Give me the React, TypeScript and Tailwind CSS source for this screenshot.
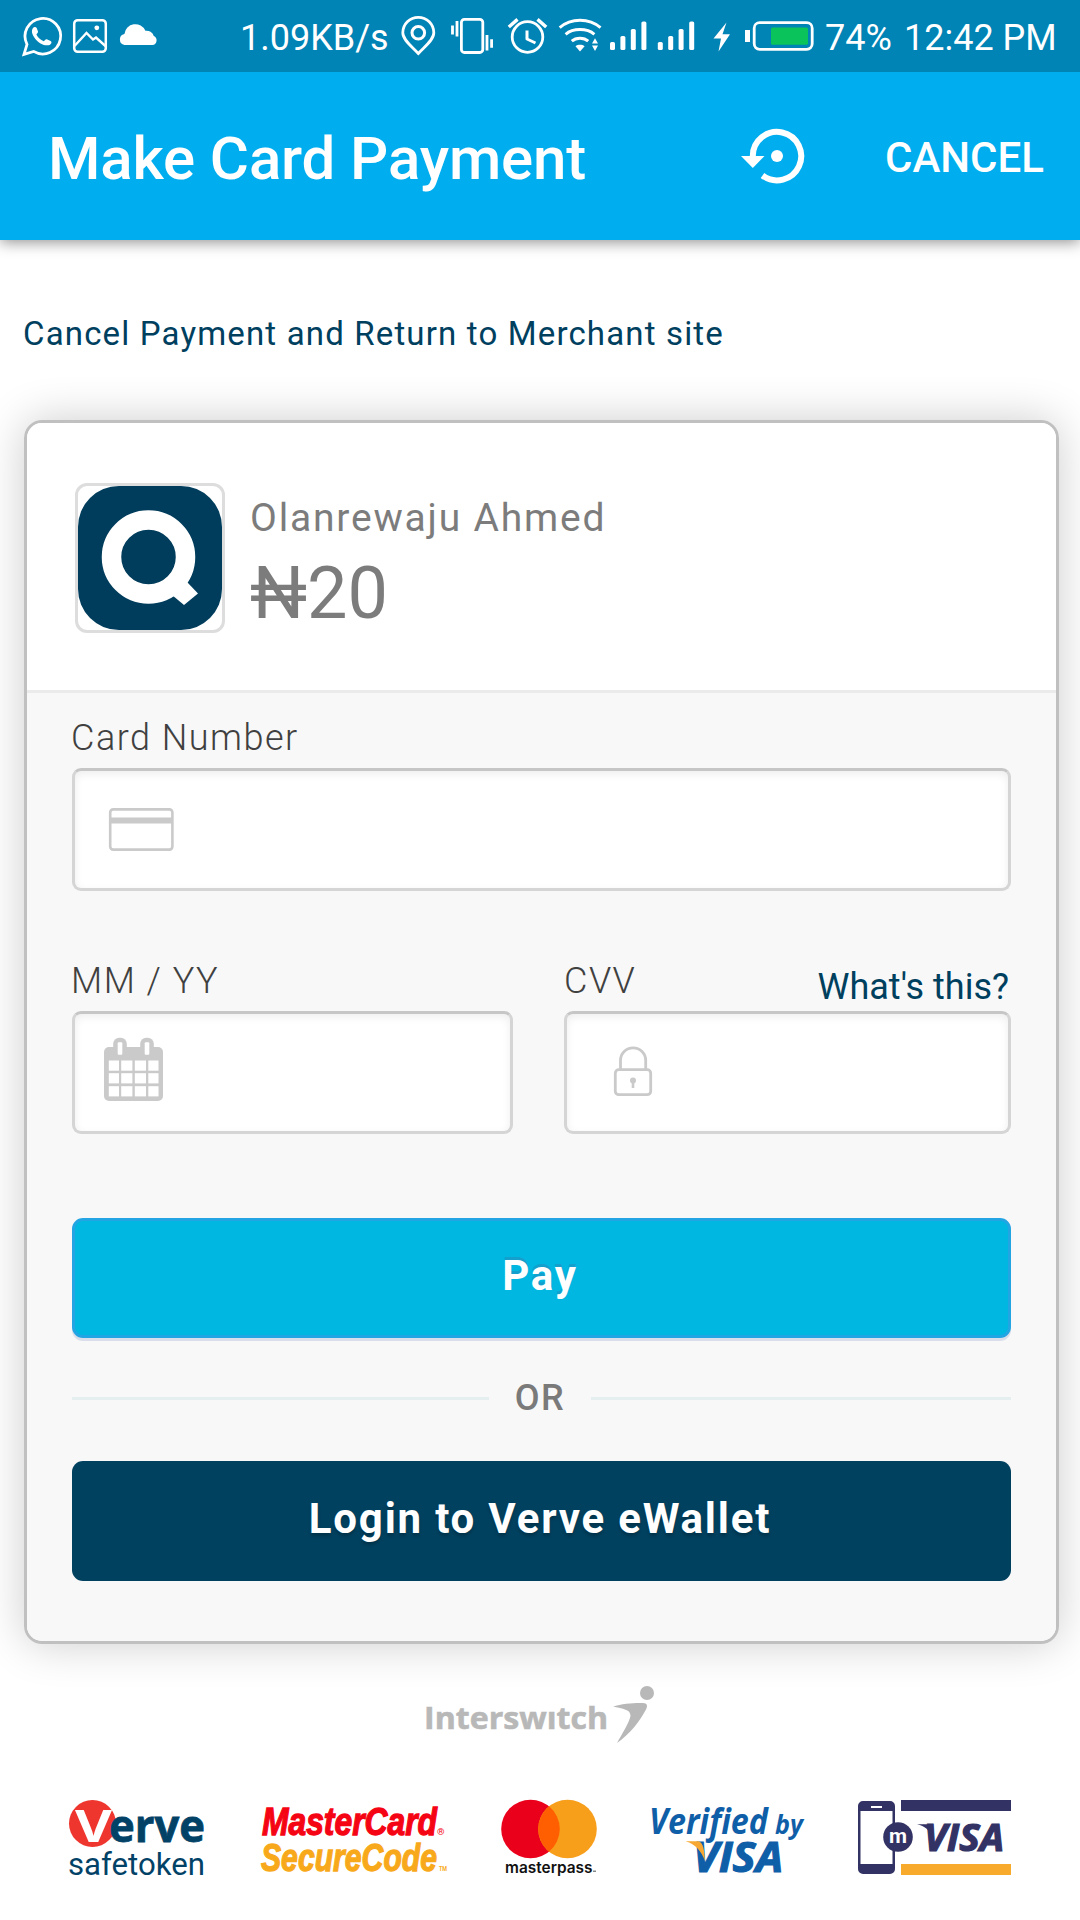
import type { ReactNode } from "react";

type BoxProps = { box: [number, number, number, number]; className?: string; children: ReactNode };

/* An svg whose viewBox uses page units, so one unit is always one pixel. */
function Art({ box, className = "", children }: BoxProps) {
  return (
    <svg
      viewBox={box.join(" ")}
      width={box[2]}
      height={box[3]}
      className={"block shrink-0 overflow-visible " + className}
      fill="none"
    >
      {children}
    </svg>
  );
}

type FitProps = {
  x: number;
  y: number;
  w: number;
  size: number;
  fill: string;
  weight?: number;
  family?: string;
  italic?: boolean;
  stroke?: number;
  children: string;
};

function Fit({ x, y, w, size, fill, weight = 400, family = "Roboto, sans-serif", italic, stroke = 0, children }: FitProps) {
  return (
    <text
      x={x}
      y={y}
      textLength={w}
      lengthAdjust="spacingAndGlyphs"
      fontSize={size}
      fontWeight={weight}
      fontFamily={family}
      fontStyle={italic ? "italic" : "normal"}
      fill={fill}
      stroke={stroke ? fill : "none"}
      strokeWidth={stroke}
    >
      {children}
    </text>
  );
}

function Signal({ x }: { x: number }) {
  return (
    <g fill="#fff">
      <rect x={x} y="42" width="5" height="8" rx="1.6" />
      <rect x={x + 10.4} y="36" width="5" height="14" rx="1.6" />
      <rect x={x + 20.8} y="29" width="5" height="21" rx="1.6" />
      <rect x={x + 31.4} y="21.5" width="5" height="28.5" rx="1.6" />
    </g>
  );
}

function StatusBar() {
  return (
    <div className="relative z-10 flex h-[72px] items-start bg-[#0083b5] text-[36px] leading-[76px] text-white">
      <Art box={[0, 0, 240, 72]}>
        <path d="M24 54.3 L27 44.3 A17.8 17.8 0 1 1 33.6 51.4 Z" stroke="#fff" strokeWidth="2.8" strokeLinejoin="miter" />
        <path
          d="M33 28 C34 26.8 36 26.8 36.8 28.2 L38 31.5 C38.3 32.5 37 33.6 36.4 34.4 C38 37.6 40.4 39.8 43.8 41.2 C44.7 40.4 45.6 38.8 46.8 39.2 L50.6 41 C52.4 42 51.4 44.6 48.6 45.2 C44 46 38.4 43 35 38.4 C31.6 34 31.2 30.4 33 28Z"
          fill="#fff"
        />
        <rect x="74.2" y="20.2" width="31.6" height="31.6" rx="3.5" stroke="#fff" strokeWidth="2.5" />
        <path d="M74.5 46 L86.5 33 L93 39.5 L96 37.5 L106 46.5" stroke="#fff" strokeWidth="2.4" />
        <circle cx="96.8" cy="27.8" r="2.4" fill="#fff" />
        <path
          d="M124.5 45 A5.6 5.6 0 0 1 124.4 34 A11 11 0 0 1 145.4 30.8 A7.6 7.6 0 0 1 153.8 36 A4.8 4.8 0 0 1 153 45Z"
          fill="#fff"
        />
      </Art>
      <span className="w-[160px] whitespace-nowrap">1.09KB/s</span>
      <Art box={[400, 0, 425, 72]}>
        <path d="M418.3 53.5 C412 46.5 402.8 40 402.8 32.8 A15.5 15.5 0 0 1 433.8 32.8 C433.8 40 424.6 46.5 418.3 53.5Z" stroke="#fff" strokeWidth="2.8" />
        <circle cx="418.3" cy="32.8" r="6.3" stroke="#fff" strokeWidth="3" />
        <rect x="461.4" y="19.3" width="21.4" height="33.2" rx="3" stroke="#fff" strokeWidth="2.8" />
        <path d="M452.5 25.5v9M457 21v15.5M487 35v15.5M491.6 39.3v8.4" stroke="#fff" strokeWidth="2.8" />
        <circle cx="527.5" cy="37" r="15.3" stroke="#fff" strokeWidth="2.8" />
        <path d="M527 30.5v8.5l8.5 4" stroke="#fff" strokeWidth="3" strokeLinejoin="round" />
        <path d="M508.8 27 L517.5 19.4 M546.2 27 L537.5 19.4" stroke="#fff" strokeWidth="3.4" />
        <path d="M559.7 27.6 C571 17.8 589 17.8 600.5 27.6 M565.6 34.3 C573 28 587 28 594.4 34.3 M571.8 41.2 C576 37.2 584 37.2 588.2 41.2" stroke="#fff" strokeWidth="3" />
        <path d="M575.5 46.2 C578 44.4 582 44.4 584.6 46.2 L580 51.4Z" fill="#fff" />
        <path d="M592 43.6 L595 38.2 L598 43.6Z M592 45.6 L595 51 L598 45.6Z" fill="#fff" />
        <Signal x={610} />
        <Signal x={657.8} />
        <path d="M726.5 22.5 L713.5 38.5 L721 38.5 L718.5 51.5 L730 34.3 L722.5 34.3Z" fill="#fff" />
        <rect x="745" y="30" width="5" height="12" fill="#fff" />
        <rect x="754.2" y="22.7" width="58" height="26.6" rx="5.5" stroke="#fff" strokeWidth="2.8" />
        <rect x="771" y="27.4" width="37" height="17.4" rx="1.5" fill="#0ac45b" />
      </Art>
      <span className="w-[79px] whitespace-nowrap">74%</span>
      <span className="whitespace-nowrap">12:42 PM</span>
    </div>
  );
}

function AppBar() {
  return (
    <header className="relative flex h-[168px] items-center bg-[#00adef] pl-[48px] font-medium text-white shadow-[0_2px_14px_rgba(0,0,0,0.45)]">
      <h1 className="w-[690px] whitespace-nowrap pt-[5px] text-[60px] leading-[168px] tracking-[-0.14px]">Make Card Payment</h1>
      <Art box={[738, 72, 146, 168]}>
        <path d="M752.8 156 A24.2 24.2 0 1 1 762.5 175.5" stroke="#fff" strokeWidth="6" />
        <path d="M741 156 H764.5 L752.8 168Z" fill="#fff" />
        <circle cx="777" cy="156" r="6" fill="#fff" />
      </Art>
      <span className="pl-px pt-[3px] text-[42px] leading-[168px]">CANCEL</span>
    </header>
  );
}

function Merchant() {
  return (
    <section className="flex h-[270px] gap-[25px] border-b-[3px] border-[#ebebeb] bg-white pl-[48px] pt-[60px]">
      <div className="h-[150px] w-[150px] overflow-hidden rounded-[12px] border-[3px] border-[#dddddd]">
        <Art box={[0, 0, 144, 144]}>
          <rect width="144" height="144" rx="41" fill="#003d5c" />
          <circle cx="70.5" cy="71" r="37" stroke="#fff" strokeWidth="19.5" />
          <path d="M93 97 L109 96 L120 107.5 L106 119 L94 109Z" fill="#fff" />
        </Art>
      </div>
      <div className="pt-[12px] text-[#7c7c7c]">
        <div className="h-[46px] whitespace-nowrap text-[39px] leading-[46px] tracking-[1.8px]">Olanrewaju Ahmed</div>
        <div className="whitespace-nowrap text-[72px] leading-[106px]">₦20</div>
      </div>
    </section>
  );
}

const field =
  "rounded-[9px] border-[3px] border-[#d5d5d5] border-t-[#c6c6c6] bg-white shadow-[inset_0_3px_9px_rgba(0,0,0,0.07)]";
const label = "text-[36px] font-light leading-[42px] tracking-[1.5px] text-[#404040] whitespace-nowrap";

function CardForm() {
  return (
    <section className="h-[948px] bg-[#f8f8f8] pl-[45px] pr-[45px] pt-[24px]">
      <div className={"ml-[-1px] " + label}>Card Number</div>
      <div className={"mt-[9px] h-[123px] w-[939px] " + field}>
        <Art box={[75, 771, 120, 117]}>
          <rect x="110.2" y="809.4" width="62.2" height="40.2" rx="3" stroke="#cacaca" strokeWidth="2.6" />
          <path d="M110 820.5H172.6" stroke="#cacaca" strokeWidth="6" />
        </Art>
      </div>
      <div className="mt-[69px] flex gap-[51px]">
        <div className="w-[441px]">
          <div className={"ml-[-1px] h-[51px] " + label}>MM / YY</div>
          <div className={"h-[123px] w-[441px] " + field}>
            <Art box={[75, 1014, 120, 117]}>
              <rect x="104" y="1047" width="59" height="54" rx="5" fill="#cacaca" />
              <rect x="113.2" y="1037.8" width="13.6" height="20" rx="6" fill="#cacaca" />
              <rect x="140.2" y="1037.8" width="13.6" height="20" rx="6" fill="#cacaca" />
              <rect x="117.7" y="1042.3" width="4.6" height="12.5" rx="1" fill="#fff" />
              <rect x="144.7" y="1042.3" width="4.6" height="12.5" rx="1" fill="#fff" />
              {[1060.5, 1073.2, 1086.2].map((y) =>
                [108.8, 121.2, 134.8, 148.3].map((x) => (
                  <rect key={x + "-" + y} x={x} y={y} width={x === 108.8 || x === 148.3 ? 10.2 : 11.2} height="10.2" fill="#fff" />
                )),
              )}
            </Art>
          </div>
        </div>
        <div className="w-[447px]">
          <div className="flex h-[51px] justify-between pr-[2px]">
            <span className={label}>CVV</span>
            <span className="whitespace-nowrap pt-[6px] text-[36px] leading-[42px] text-[#00405f]">What's this?</span>
          </div>
          <div className={"h-[123px] w-[447px] " + field}>
            <Art box={[567, 1018, 120, 117]}>
              <rect x="615.3" y="1073.7" width="35.4" height="25" rx="3.5" stroke="#cacaca" strokeWidth="2.8" />
              <path d="M620.5 1073V1064.5A12.6 12.6 0 0 1 645.7 1064.5V1073" stroke="#cacaca" strokeWidth="2.8" />
              <circle cx="633" cy="1084.5" r="3" fill="#cacaca" />
              <path d="M633 1084V1092" stroke="#cacaca" strokeWidth="2.6" />
            </Art>
          </div>
        </div>
      </div>
      <button className="mt-[84px] block h-[120px] w-[939px] rounded-[11px] border-[3px] border-[#24a5e3] bg-[#00b7e1] pb-[4px] pr-[3px] text-[42px] font-bold leading-[110px] tracking-[1.8px] text-white shadow-[0_3px_0_#d9deea] [text-shadow:0_-3px_0_#159fcd]">
        Pay
      </button>
      <div className="mt-[38px] flex h-[44px] items-center text-[36px] font-medium leading-[44px] tracking-[1.5px] text-[#7a7a7a]">
        <span className="mt-px h-[3px] w-[417px] bg-[#e6efef]" />
        <span className="w-[102px] text-center">OR</span>
        <span className="mt-px h-[3px] flex-1 bg-[#e6efef]" />
      </div>
      <button className="mt-[41px] block h-[120px] w-[939px] rounded-[11px] bg-[#00415f] pb-[4px] pr-[3px] text-[42px] font-bold leading-[116px] tracking-[1.8px] text-white [text-shadow:0_3px_3px_rgba(0,0,0,0.2)]">
        Login to Verve eWallet
      </button>
    </section>
  );
}

function Interswitch() {
  return (
    <Art box={[420, 1680, 240, 65]} className="ml-[420px] mt-[36px]">
      <Fit x={424} y={1728.7} w={184} size={31} weight={700} family="Open Sans, sans-serif" fill="#b8b8b8" stroke={0.6}>
        Interswıtch
      </Fit>
      <circle cx="647" cy="1693" r="7" fill="#b8b8b8" />
      <path d="M613 1706.5 C622 1703.5 636 1702.6 643 1703 C647 1703.2 648 1705.5 646 1709.5 C640 1721 630 1734 617 1743 C622 1734 629 1723 630.5 1716 C631 1709 621 1708.5 613 1706.5Z" fill="#b8b8b8" />
    </Art>
  );
}

function Partners() {
  return (
    <footer className="mt-[50px] flex h-[85px] pl-[60px]">
      <Art box={[60, 1795, 190, 85]}>
        <circle cx="92.5" cy="1823.5" r="23.5" fill="#ee352e" />
        <Fit x={109} y={1842} w={96} size={45} weight={700} family="Open Sans, sans-serif" fill="#034267" stroke={0.8}>erve</Fit>
        <Fit x={75} y={1842} w={37} size={44} weight={700} family="Open Sans, sans-serif" fill="#fff">V</Fit>
        <Fit x={68} y={1874.5} w={137} size={31} fill="#034267">safetoken</Fit>
      </Art>
      <Art box={[250, 1795, 210, 85]}>
        <Fit x={262} y={1835} w={175} size={38.5} weight={700} italic family="Liberation Sans, sans-serif" fill="#f50514" stroke={1.3}>MasterCard</Fit>
        <Fit x={261} y={1871} w={176} size={38.5} weight={700} italic family="Liberation Sans, sans-serif" fill="#f8a91b" stroke={1.3}>SecureCode</Fit>
        <Fit x={437} y={1835} w={7.5} size={9} fill="#f50514">®</Fit>
        <Fit x={439} y={1871} w={8} size={7} weight={700} fill="#f8a91b">TM</Fit>
      </Art>
      <Art box={[460, 1795, 180, 85]}>
        <circle cx="530.5" cy="1829" r="29.3" fill="#eb001b" />
        <circle cx="567.5" cy="1829" r="29.3" fill="#f79e1b" />
        <path d="M549 1806.3 A29.3 29.3 0 0 1 549 1851.7 A29.3 29.3 0 0 1 549 1806.3Z" fill="#ff5f00" />
        <Fit x={505} y={1872.5} w={87.5} size={15.5} weight={600} family="Inter, sans-serif" fill="#111">masterpass</Fit>
        <rect x="593" y="1870.5" width="3" height="1.5" fill="#888" />
      </Art>
      <Art box={[640, 1795, 200, 85]}>
        <Fit x={649} y={1833.5} w={119} size={36} weight={700} italic family="Open Sans, sans-serif" fill="#0f5ea8">Verified</Fit>
        <Fit x={775} y={1833.5} w={28} size={27} weight={700} italic family="Open Sans, sans-serif" fill="#0f5ea8">by</Fit>
        <Fit x={693} y={1871.5} w={90} size={42} weight={700} italic family="Open Sans, sans-serif" fill="#0f5ea8" stroke={1.2}>VISA</Fit>
        <path d="M685.5 1841.3 H699 C703 1843 704.5 1850 705 1861 C701 1851 696 1844.5 685.5 1841.3Z" fill="#f7a832" />
      </Art>
      <Art box={[840, 1795, 200, 85]}>
        <path fillRule="evenodd" d="M863 1801 H890 A5 5 0 0 1 895 1806 V1869 A5 5 0 0 1 890 1874 H863 A5 5 0 0 1 858 1869 V1806 A5 5 0 0 1 863 1801Z M860.5 1811 V1864 H892.5 V1811Z" fill="#323264" />
        <rect x="871" y="1806" width="11" height="2" fill="#fff" />
        <rect x="901" y="1800" width="110" height="11" fill="#323264" />
        <rect x="901" y="1864" width="110" height="11" fill="#f7aa2b" />
        <circle cx="898" cy="1837" r="14.8" fill="#323264" />
        <Fit x={889} y={1843} w={18} size={20.5} weight={700} fill="#fff">m</Fit>
        <Fit x={924} y={1851} w={80} size={37.5} weight={700} italic family="Open Sans, sans-serif" fill="#323264" stroke={1.2}>VISA</Fit>
        <path d="M917 1824.3 H930 L932 1837 C929 1830 925 1826 917 1824.3Z" fill="#323264" />
      </Art>
    </footer>
  );
}

export default function App() {
  return (
    <div className="h-[1920px] w-[1080px] overflow-hidden bg-white font-[Roboto,sans-serif]">
      <StatusBar />
      <AppBar />
      <a className="block h-[180px] whitespace-nowrap pl-[23px] pt-[73px] text-[33px] leading-[42px] tracking-[1.16px] text-[#00405f]">
        Cancel Payment and Return to Merchant site
      </a>
      <main className="ml-[24px] h-[1224px] w-[1035px] overflow-hidden rounded-[18px] border-[3px] border-[#c0c0c0] shadow-[0_0_45px_rgba(0,0,0,0.2)]">
        <Merchant />
        <CardForm />
      </main>
      <Interswitch />
      <Partners />
    </div>
  );
}
